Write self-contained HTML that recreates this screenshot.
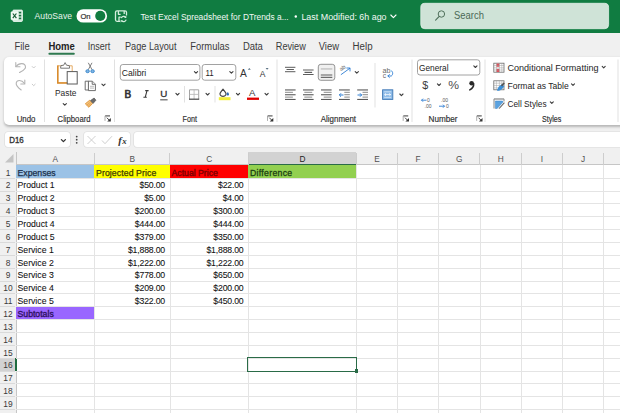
<!DOCTYPE html>
<html><head><meta charset="utf-8">
<style>
*{margin:0;padding:0;box-sizing:border-box}
html,body{width:620px;height:413px;overflow:hidden;background:#fff;font-family:"Liberation Sans",sans-serif;}
.a{position:absolute}
#title{position:absolute;left:0;top:0;width:620px;height:32.5px;background:#107c41}
#menu{position:absolute;left:0;top:32.5px;width:620px;height:119.5px;background:#f0f0f0}
#ribbon{position:absolute;left:4.3px;top:57px;width:630px;height:68.1px;background:#fff;border-radius:5px;box-shadow:0 1.2px 2.5px rgba(0,0,0,.24)}
.box{position:absolute;background:#fff;border-radius:3px;box-shadow:0 0 0 0.6px #dadada}
.colhdr{position:absolute;left:0;top:152px;width:620px;height:13px;background:#f0f0f0;border-bottom:1px solid #c6c6c6}
.rowhdr{position:absolute;left:0;top:152px;width:16.5px;height:261px;background:#f0f0f0;border-right:1px solid #c6c6c6}
.ch{position:absolute;top:152.6px;height:12px;line-height:12px;text-align:center;font-size:8.3px;color:#505050;padding-left:1px}
.cs{position:absolute;top:152.5px;width:1px;height:12px;background:#cdcdcd}
.hl{position:absolute;left:16px;width:604px;height:1px;background:#e4e4e4}
.vl{position:absolute;top:165px;width:1px;height:248px;background:#e4e4e4}
.rh{position:absolute;left:0.5px;width:15px;text-align:center;font-size:8.4px;color:#3a3a3a;line-height:13px;padding-top:1.6px}
.rs{position:absolute;left:0;width:15px;height:1px;background:#dadada}
.ct{position:absolute;font-size:8.7px;line-height:13px;color:#111;white-space:nowrap;padding-top:1.6px;-webkit-text-stroke:0.08px currentColor}
</style></head><body>
<div id="title"></div>
<div id="menu"></div>
<div id="ribbon"></div>
<svg class="a" style="left:0;top:0" width="620" height="60" viewBox="0 0 620 60" font-family="Liberation Sans, sans-serif">
  <!-- excel icon -->
  <rect x="12.9" y="10.1" width="9.5" height="11.3" rx="0.8" fill="#cfeada" stroke="#f4fbf6" stroke-width="0.9"/>
  <g fill="#1a6b3f"><rect x="18.6" y="11.8" width="2.6" height="1.6"/><rect x="18.6" y="14.8" width="2.6" height="1.6"/><rect x="18.6" y="17.6" width="2.6" height="1.6"/></g>
  <path d="M13.5 13.6h4.5 M13.5 16.6h4.5 M13.5 19.4h4.5" stroke="#9fd1b2" stroke-width="0.5"/>
  <rect x="11" y="11.8" width="7.2" height="7.9" rx="0.6" fill="#f0faf3" stroke="#ffffff" stroke-width="0.5"/>
  <path d="M12.8 13.5l3.6 4.6 M16.4 13.5l-3.6 4.6" stroke="#175c36" stroke-width="1.2"/>
  <g fill="#ffffff">
    <text x="34.6" y="19.2" font-size="8.8" textLength="37.4" lengthAdjust="spacingAndGlyphs" fill="#e6f2ea">AutoSave</text>
  </g>
  <!-- toggle -->
  <rect x="76.5" y="9.2" width="30.6" height="13.4" rx="6.7" fill="#fff"/>
  <circle cx="100.3" cy="15.9" r="5.1" fill="#107c41"/>
  <text x="80.4" y="19.1" font-size="7.6" fill="#333" stroke="#333" stroke-width="0.2" textLength="10.2" lengthAdjust="spacingAndGlyphs">On</text>
  <!-- save icon -->
  <g fill="none" stroke="#d4eedd" stroke-width="1.3" stroke-linejoin="round">
    <path d="M120 21.3h-3c-0.9 0-1.5-0.6-1.5-1.5v-7.5c0-0.9 0.6-1.5 1.5-1.5h8c0.9 0 1.5 0.6 1.5 1.5v3.2"/>
    <path d="M118.4 11v3.3h2.2 M124.2 11v3"/>
    <path d="M119 21v-3.8h1.8"/>
  </g>
  <g fill="none" stroke="#d4eedd" stroke-width="1.2">
    <path d="M121.2 18.2a2.6 2.6 0 0 1 4.6 -0.8 M126.2 19.6a2.6 2.6 0 0 1 -4.6 1"/>
  </g>
  <path d="M126.3 15.8v2.2h-2.2z M120.6 22.4v-2.2h2.2z" fill="#d4eedd"/>
  <text x="140.4" y="19.6" font-size="8.9" fill="#f2f8f4" textLength="148.3" lengthAdjust="spacingAndGlyphs">Test Excel Spreadsheet for DTrends a...</text>
  <circle cx="295.8" cy="16.5" r="1.2" fill="#fff"/>
  <text x="301.4" y="19.6" font-size="8.9" fill="#f2f8f4" textLength="85.2" lengthAdjust="spacingAndGlyphs">Last Modified: 6h ago</text>
  <path d="M390.8 15l2.6 2.6 2.6-2.6" fill="none" stroke="#fff" stroke-width="1.1" stroke-linecap="round" stroke-linejoin="round"/>
  <!-- search -->
  <rect x="420.8" y="3.3" width="187.8" height="25.4" rx="4" fill="#cfe3d7" stroke="#e4f0e8" stroke-width="0.8"/>
  <circle cx="441.4" cy="14" r="3.2" fill="none" stroke="#4f6f5a" stroke-width="1"/>
  <path d="M439 16.6l-3.4 3.6" stroke="#4f6f5a" stroke-width="1.1" stroke-linecap="round"/>
  <text x="454.1" y="19.4" font-size="10.6" fill="#4a6956" textLength="29.8" lengthAdjust="spacingAndGlyphs">Search</text>
  <!-- menu -->
  <g fill="#3a3a3a" font-size="10">
    <text x="14.5" y="49.5" textLength="15.2" lengthAdjust="spacingAndGlyphs">File</text>
    <text x="48.4" y="49.5" textLength="26.4" lengthAdjust="spacingAndGlyphs" font-weight="bold" fill="#222">Home</text>
    <text x="87.7" y="49.5" textLength="22.6" lengthAdjust="spacingAndGlyphs">Insert</text>
    <text x="125" y="49.5" textLength="51.5" lengthAdjust="spacingAndGlyphs">Page Layout</text>
    <text x="190.3" y="49.5" textLength="39.1" lengthAdjust="spacingAndGlyphs">Formulas</text>
    <text x="242.9" y="49.5" textLength="20" lengthAdjust="spacingAndGlyphs">Data</text>
    <text x="275.8" y="49.5" textLength="30" lengthAdjust="spacingAndGlyphs">Review</text>
    <text x="318.7" y="49.5" textLength="20.3" lengthAdjust="spacingAndGlyphs">View</text>
    <text x="352.6" y="49.5" textLength="20" lengthAdjust="spacingAndGlyphs">Help</text>
  </g>
  <rect x="48.4" y="52.8" width="26.4" height="1.9" rx="0.9" fill="#2f7a50"/>
</svg>
<svg class="a" style="left:0;top:0" width="620" height="413" viewBox="0 0 620 413" font-family="Liberation Sans, sans-serif">
<!-- font name/size boxes -->
<rect x="120.3" y="64.5" width="79.6" height="15.7" rx="2.5" fill="#fff" stroke="#8a8a8a" stroke-width="0.8"/>
<rect x="202.2" y="64.5" width="33.6" height="15.7" rx="2.5" fill="#fff" stroke="#8a8a8a" stroke-width="0.8"/>
<!-- number format box -->
<rect x="417.5" y="59.8" width="62.3" height="15.2" rx="2.5" fill="#fff" stroke="#8a8a8a" stroke-width="0.8"/>

<g fill="#e1e1e1">
  <rect x="44" y="59.5" width="1" height="62.5"/>
  <rect x="114" y="59.5" width="1" height="62.5"/>
  <rect x="276.5" y="59.5" width="1" height="62.5"/>
  <rect x="411.5" y="59.5" width="1" height="62.5"/>
  <rect x="484.5" y="59.5" width="1" height="62.5"/>
  <rect x="617.5" y="59.5" width="1" height="62.5"/>
  <rect x="184" y="86" width="1" height="16.5"/>
  <rect x="214.5" y="86" width="1" height="16.5"/>
  <rect x="374.5" y="63" width="1" height="44.5"/>
</g>
<!-- group labels -->
<g fill="#2e2e2e" font-size="8.2" stroke="#2e2e2e" stroke-width="0.15" transform="translate(0,0.6)">
  <text x="16.7" y="121.8" textLength="18.8" lengthAdjust="spacingAndGlyphs">Undo</text>
  <text x="57.6" y="121.8" textLength="32.9" lengthAdjust="spacingAndGlyphs">Clipboard</text>
  <text x="182.6" y="121.8" textLength="14.4" lengthAdjust="spacingAndGlyphs">Font</text>
  <text x="320.8" y="121.8" textLength="35.2" lengthAdjust="spacingAndGlyphs">Alignment</text>
  <text x="428.6" y="121.8" textLength="29" lengthAdjust="spacingAndGlyphs">Number</text>
  <text x="542" y="121.8" textLength="19.3" lengthAdjust="spacingAndGlyphs">Styles</text>
</g>
<!-- launchers -->
<g>
<path d="M105 115.9h5 M105 115.9v5" fill="none" stroke="#999" stroke-width="0.8"/><path d="M105.3 115.9h4.7" fill="none" stroke="#555" stroke-width="0.9"/><path d="M106.8 117.7l2.8 2.8" stroke="#333" stroke-width="0.9"/><path d="M110.8 121.5v-3.6l-3.6 3.6z" fill="#333"/>
<path d="M267.5 115.9h5 M267.5 115.9v5" fill="none" stroke="#999" stroke-width="0.8"/><path d="M267.8 115.9h4.7" fill="none" stroke="#555" stroke-width="0.9"/><path d="M269.3 117.7l2.8 2.8" stroke="#333" stroke-width="0.9"/><path d="M273.3 121.5v-3.6l-3.6 3.6z" fill="#333"/>
<path d="M403.2 115.9h5 M403.2 115.9v5" fill="none" stroke="#999" stroke-width="0.8"/><path d="M403.5 115.9h4.7" fill="none" stroke="#555" stroke-width="0.9"/><path d="M405.0 117.7l2.8 2.8" stroke="#333" stroke-width="0.9"/><path d="M409.0 121.5v-3.6l-3.6 3.6z" fill="#333"/>
<path d="M476.7 115.9h5 M476.7 115.9v5" fill="none" stroke="#999" stroke-width="0.8"/><path d="M477.0 115.9h4.7" fill="none" stroke="#555" stroke-width="0.9"/><path d="M478.5 117.7l2.8 2.8" stroke="#333" stroke-width="0.9"/><path d="M482.5 121.5v-3.6l-3.6 3.6z" fill="#333"/>
</g>
<!-- chevrons -->
<g fill="none" stroke="#3c3c3c" stroke-width="1.1" stroke-linecap="round" stroke-linejoin="round" transform="translate(0,-0.6)">
  <path d="M63.2 104.2l1.6 1.6 1.6-1.6"/>
  <path d="M101.9 84.7l1.6 1.6 1.6-1.6"/>
  <path d="M194.4 72.2l1.6 1.6 1.6-1.6"/>
  <path d="M229.8 72.2l1.6 1.6 1.6-1.6"/>
  <path d="M175.9 94l1.6 1.6 1.6-1.6"/>
  <path d="M206 94l1.6 1.6 1.6-1.6"/>
  <path d="M236.4 94l1.6 1.6 1.6-1.6"/>
  <path d="M265 94l1.6 1.6 1.6-1.6"/>
  <path d="M355.2 72.2l1.6 1.6 1.6-1.6"/>
  <path d="M399.8 94.6l1.6 1.6 1.6-1.6"/>
  <path d="M473.8 66.5l1.6 1.6 1.6-1.6"/>
  <path d="M437.4 84.5l1.6 1.6 1.6-1.6"/>
  <path d="M602.2 67l1.5 1.5 1.5-1.5"/>
  <path d="M571.5 84.5l1.5 1.5 1.5-1.5"/>
  <path d="M550.3 102.5l1.5 1.5 1.5-1.5"/>
</g>
<g fill="none" stroke="#c4c4c4" stroke-width="0.9" stroke-linecap="round" stroke-linejoin="round">
  <path d="M32.2 66.5l1.5 1.5 1.5-1.5"/>
  <path d="M32.2 84.2l1.5 1.5 1.5-1.5"/>
</g>
<!-- undo / redo -->
<g fill="none" stroke="#b4b4b4" stroke-width="1.1" stroke-linecap="round" stroke-linejoin="round">
  <path d="M16 66.5 C19 62.5 25.5 62.5 25.5 67.2 C25.5 69.5 22 71 19.5 72.5"/>
  <path d="M15.8 62.5v4.2h4.2"/>
  <path d="M21.2 90 C18.5 88 15.8 86 16.2 83 C16.8 79.8 21.5 79.5 24.5 83.5"/>
  <path d="M24.8 80v4h-4"/>
</g>
<!-- paste -->
<g>
  <path d="M57.6 65.8h14.6v17h-14.6z" fill="#fff" stroke="#e3a455" stroke-width="0.9"/>
  <path d="M57.8 65.5v17.5h14" fill="none" stroke="#d98c2e" stroke-width="1.6"/>
  <path d="M60.6 68.2l0.3-2.6 2.8-0.4 1.4-2.6 1.4 2.6 2.8 0.4 0.3 2.6z" fill="#fff" stroke="#6a6a6a" stroke-width="0.9" stroke-linejoin="round"/>
  <rect x="67.2" y="71.6" width="10" height="12.4" fill="#fff" stroke="#5a5a5a" stroke-width="1"/>
</g>
<text x="55" y="95.7" font-size="8.4" fill="#2a2a2a" textLength="21.4" lengthAdjust="spacingAndGlyphs">Paste</text>
<!-- cut -->
<g fill="none" stroke-width="0.9">
  <path d="M88.3 62.8l3.8 7 M92 62.8l-3.8 7" stroke="#707070"/>
  <ellipse cx="87.6" cy="71.2" rx="1.7" ry="1.5" stroke="#3a86c8" fill="#7fb6e6"/>
  <ellipse cx="92.6" cy="71.2" rx="1.7" ry="1.5" stroke="#3a86c8" fill="#7fb6e6"/>
</g>
<!-- copy -->
<g fill="#fff" stroke="#5e5e5e" stroke-width="0.9" stroke-linejoin="round">
  <path d="M85.2 81.2h3.5v8.8h-3.5z"/>
  <path d="M88.4 81.2h4l3 3v6.4h-7z"/>
  <path d="M92.2 81.5v2.8h3" />
  <path d="M90 86.3h4 M90 88.1h4" stroke="#aaa" stroke-width="0.8"/>
</g>
<!-- format painter -->
<g stroke-linejoin="round">
  <path d="M85.3 103.8l4.4-3.6 2.8 3.3-3.6 3.8z" fill="#f4c27a" stroke="#d98a2c" stroke-width="0.8"/>
  <path d="M86.8 105.3l3-2.7 M88.2 106.2l2.6-2.6" stroke="#d98a2c" stroke-width="0.6"/>
  <path d="M90.5 100.6l3.6-2.6 1.8 2.2-2.8 3.2z" fill="#6a6a6a" stroke="#555" stroke-width="0.7"/>
</g>
<text x="121.8" y="76" font-size="8.6" fill="#242424" textLength="24.5" lengthAdjust="spacingAndGlyphs">Calibri</text>
<text x="205.4" y="76" font-size="8.6" fill="#242424" textLength="8.2" lengthAdjust="spacingAndGlyphs">11</text>
<!-- grow/shrink -->
<text x="240" y="76.8" font-size="10.2" fill="#333">A</text>
<path d="M247.8 69.8l1.5-1.8 1.5 1.8z" fill="#5b7283"/>
<text x="259.8" y="77" font-size="8.5" fill="#333">A</text>
<path d="M265.6 68l1.5 1.8 1.5-1.8z" fill="#5b7283"/>
<!-- B I U -->
<text x="124.6" y="97.8" font-size="10" fill="#333" stroke="#333" stroke-width="0.65">B</text>
<path d="M145.2 90.6h3.4 M143.4 97.3h3.4 M147 90.6l-1.8 6.7" fill="none" stroke="#3a3a3a" stroke-width="1.1"/>
<text x="160.2" y="97.3" font-size="9.8" fill="#303030" stroke="#303030" stroke-width="0.3">U</text>
<rect x="160.2" y="99.4" width="7.4" height="0.9" fill="#303030"/>
<!-- borders -->
<g fill="none">
  <path d="M189.5 99v-9.2h9.2v9.2" stroke="#9a9a9a" stroke-width="0.9"/>
  <path d="M194.1 89.8v9.2 M189.5 94.4h9.2" stroke="#b5b5b5" stroke-width="0.8"/>
  <path d="M189 99.2h10.2" stroke="#444" stroke-width="1.2"/>
</g>
<!-- fill color -->
<path d="M223 89.2l-2.6 3.4c-1 1.5-0.2 3.8 2.6 3.8s3.6-2.3 2.6-3.8z" fill="#fff" stroke="#454545" stroke-width="1.2" stroke-linejoin="round"/>
<path d="M227.8 92c-0.8 1-1.2 1.8-1.2 2.4 0 0.7 0.5 1.1 1.2 1.1s1.2-0.4 1.2-1.1c0-0.6-0.4-1.4-1.2-2.4z" fill="#2f6db5"/>
<rect x="218.8" y="97.2" width="11.7" height="3" fill="#f2ee3a"/>
<!-- font color -->
<text x="249" y="95.8" font-size="9.6" fill="#383838">A</text>
<rect x="247" y="97.6" width="12" height="2.3" fill="#e00000"/>
<!-- alignment icons -->
<g fill="#5c5c5c">
  <rect x="285" y="66.8" width="10.4" height="1"/><rect x="286.5" y="69" width="7.4" height="1"/><rect x="285" y="71.2" width="10.4" height="1"/>
  <rect x="303" y="69.5" width="10.6" height="1"/><rect x="304.5" y="71.8" width="7.6" height="1.2"/><rect x="303" y="74" width="10.6" height="1"/>
  <rect x="320.5" y="73.5" width="11" height="1"/><rect x="320.5" y="75.8" width="11" height="1.2"/><rect x="320.5" y="78" width="11" height="1"/>
</g>
<rect x="318.3" y="64.3" width="16.5" height="16" rx="2.5" fill="#f0f0f0" stroke="#7a7a7a" stroke-width="0.8"/>
<g fill="#5c5c5c">
  <rect x="320.8" y="68.5" width="11.5" height="0.9" fill="#aaa"/><rect x="320.8" y="74.5" width="11.5" height="1"/><rect x="320.8" y="76.8" width="11.5" height="1.1"/>
</g>
<!-- orientation -->
<text x="0" y="0" font-size="5.6" fill="#5a5a5a" transform="translate(341,71.2) rotate(-35)">ab</text>
<g fill="none" stroke="#2b7cd3" stroke-width="0.9" stroke-linecap="round">
  <path d="M341.2 74.5l8.6-6.2"/>
  <path d="M346.8 68h3.2v3"/>
</g>
<g>
<rect x="285" y="89.4" width="10.6" height="1.1" fill="#5a5a5a"/>
<rect x="285.0" y="91.8" width="7.9" height="1" fill="#8a8a8a"/>
<rect x="285" y="94.2" width="10.6" height="1.1" fill="#5a5a5a"/>
<rect x="285.0" y="96.6" width="7.9" height="1" fill="#8a8a8a"/>
<rect x="285" y="98.9" width="10.6" height="1.1" fill="#5a5a5a"/>
<rect x="303" y="89.4" width="10.6" height="1.1" fill="#5a5a5a"/>
<rect x="304.3" y="91.8" width="7.9" height="1" fill="#8a8a8a"/>
<rect x="303" y="94.2" width="10.6" height="1.1" fill="#5a5a5a"/>
<rect x="304.3" y="96.6" width="7.9" height="1" fill="#8a8a8a"/>
<rect x="303" y="98.9" width="10.6" height="1.1" fill="#5a5a5a"/>
<rect x="321" y="89.4" width="10.6" height="1.1" fill="#5a5a5a"/>
<rect x="323.7" y="91.8" width="7.9" height="1" fill="#8a8a8a"/>
<rect x="321" y="94.2" width="10.6" height="1.1" fill="#5a5a5a"/>
<rect x="323.7" y="96.6" width="7.9" height="1" fill="#8a8a8a"/>
<rect x="321" y="98.9" width="10.6" height="1.1" fill="#5a5a5a"/>
<rect x="339" y="89.4" width="10.8" height="1.1" fill="#5a5a5a"/>
<rect x="344.3" y="91.8" width="5.5" height="1" fill="#8a8a8a"/>
<rect x="344.3" y="94.2" width="5.5" height="1" fill="#8a8a8a"/>
<rect x="344.3" y="96.6" width="5.5" height="1" fill="#8a8a8a"/>
<rect x="339" y="98.9" width="10.8" height="1.1" fill="#5a5a5a"/>
<rect x="357.2" y="89.4" width="10.8" height="1.1" fill="#5a5a5a"/>
<rect x="362.5" y="91.8" width="5.5" height="1" fill="#8a8a8a"/>
<rect x="362.5" y="94.2" width="5.5" height="1" fill="#8a8a8a"/>
<rect x="362.5" y="96.6" width="5.5" height="1" fill="#8a8a8a"/>
<rect x="357.2" y="98.9" width="10.8" height="1.1" fill="#5a5a5a"/>
</g>
<g fill="none" stroke="#2b7cd3" stroke-width="1">
  <path d="M343.5 95h-4 M341 93.3l-1.7 1.7 1.7 1.7"/>
  <path d="M357.5 95h4 M360 93.3l1.7 1.7-1.7 1.7"/>
</g>
<!-- wrap text -->
<text x="382.6" y="72.6" font-size="6.8" fill="#6a6a6a" textLength="8" lengthAdjust="spacingAndGlyphs">ab</text>
<text x="382.8" y="77.8" font-size="6.8" fill="#6a6a6a">c</text>
<g fill="none" stroke="#2b7cd3" stroke-width="0.9" stroke-linecap="round" stroke-linejoin="round">
  <path d="M391.5 70.8c1.5 0.8 1.8 3.8-0.2 5.2h-3.3"/>
  <path d="M389.4 74.5l-1.5 1.5 1.5 1.5"/>
</g>
<!-- merge -->
<rect x="382.6" y="89.8" width="10.2" height="9.6" fill="#8dbbe8" stroke="#3f78b5" stroke-width="0.9"/>
<path d="M384.2 91.8h7 M384.2 97.4h7" stroke="#d9e9f8" stroke-width="0.8"/>
<path d="M384.6 94.6h6.2 M386 93.4l-1.3 1.2 1.3 1.2 M389.4 93.4l1.3 1.2-1.3 1.2" fill="none" stroke="#fff" stroke-width="0.8"/>
<text x="419" y="71" font-size="8.6" fill="#242424" textLength="29.6" lengthAdjust="spacingAndGlyphs">General</text>
<text x="422.2" y="89" font-size="11.6" fill="#3a3a3a" textLength="6" lengthAdjust="spacingAndGlyphs">$</text>
<text x="448.3" y="89.4" font-size="11.8" fill="#505050" textLength="10.8" lengthAdjust="spacingAndGlyphs">%</text>
<circle cx="471.6" cy="83.2" r="2.3" fill="#2a2a2a"/>
<path d="M473.6 83.5c0.3 2.8-1.2 5-3.8 6.4" fill="none" stroke="#2a2a2a" stroke-width="1.6" stroke-linecap="round"/>
<!-- dec/inc decimal -->
<g font-size="5" fill="#555">
  <text x="427" y="102">0</text>
  <text x="424.5" y="108">.00</text>
  <text x="441" y="102">.00</text>
  <text x="446" y="108">0</text>
</g>
<g fill="none" stroke="#2b7cd3" stroke-width="0.9">
  <path d="M426.5 100.2h-5 M423 98.7l-1.5 1.5 1.5 1.5"/>
  <path d="M439 106.2h5.5 M443 104.7l1.5 1.5-1.5 1.5"/>
</g>
<!-- styles icons -->
<g>
  <rect x="493.8" y="63.2" width="10.2" height="9" fill="#fff" stroke="#6a6a6a" stroke-width="0.8"/>
  <rect x="496.4" y="63.6" width="3" height="3.2" fill="#e0505a"/>
  <rect x="496.4" y="68.8" width="3" height="3.2" fill="#e0505a"/>
  <path d="M493.8 65.5h10.2 M493.8 67.8h10.2 M493.8 70h10.2 M496.4 63.2v9 M499.4 63.2v9 M501.8 63.2v9" stroke="#9a9a9a" stroke-width="0.45"/>
</g>
<g>
  <rect x="493.8" y="80.8" width="10.2" height="9" fill="#fff" stroke="#6a6a6a" stroke-width="0.8"/>
  <path d="M493.8 83.2h10.2 M493.8 85.5h10.2 M493.8 87.8h10.2 M496.4 80.8v9 M499.4 80.8v9 M501.8 80.8v9" stroke="#9a9a9a" stroke-width="0.45"/>
  <path d="M497 90.8c0.5-2 1.2-3.8 2.5-4.8l2.2-1.8 2.6 2-2 2.5c-1 1.3-3 2.2-5.3 2.1z" fill="#3d8fd6"/>
  <path d="M500.8 85.2l2.8-2.8 1.2 1.2-2.6 2.8z" fill="#555"/>
</g>
<g>
  <path d="M494 108.5v-9.6h10v2.5" fill="none" stroke="#6a6a6a" stroke-width="0.8"/>
  <path d="M494.4 99.4h9.2" stroke="#999" stroke-width="0.5"/>
  <path d="M495.4 101h7.2l0.4 1-5.8 6.5h-1.8z" fill="#5aa2e0" stroke="#3a82c4" stroke-width="0.5"/>
  <path d="M498.5 108.4l5.5-6.2 0.8 0.8-5.2 5.8z" fill="#666"/>
</g>
<g fill="#242424" font-size="8.6">
  <text x="507.5" y="71.1" textLength="91" lengthAdjust="spacingAndGlyphs">Conditional Formatting</text>
  <text x="507.5" y="89" textLength="61.2" lengthAdjust="spacingAndGlyphs">Format as Table</text>
  <text x="507.5" y="106.6" textLength="39.1" lengthAdjust="spacingAndGlyphs">Cell Styles</text>
</g>
</svg>

<div class="box" style="left:5.3px;top:132.2px;width:64.4px;height:15.2px"></div>
<div class="box" style="left:83.5px;top:132.2px;width:46.7px;height:15.2px"></div>
<div class="box" style="left:133.6px;top:132.2px;width:500px;height:15.2px"></div>
<svg class="a" style="left:0;top:125" width="620" height="40" viewBox="0 125 620 40" font-family="Liberation Sans, sans-serif">
  <text x="9.2" y="143.3" font-size="9" fill="#333" stroke="#333" stroke-width="0.35" textLength="14.5" lengthAdjust="spacingAndGlyphs">D16</text>
  <path d="M61.4 139.6l2 2 2-2" fill="none" stroke="#333" stroke-width="1.3" stroke-linecap="round" stroke-linejoin="round"/>
  <g fill="#444"><circle cx="76.7" cy="136.6" r="0.9"/><circle cx="76.7" cy="139.7" r="0.9"/><circle cx="76.7" cy="142.8" r="0.9"/></g>
  <path d="M87.5 136l8 8 M95.5 136l-8 8" stroke="#c8c8c8" stroke-width="0.9"/>
  <path d="M102 140.5l3 3.2 7-7.5" fill="none" stroke="#c8c8c8" stroke-width="0.9"/>
  <text x="118.3" y="143.6" font-size="10.5" font-weight="bold" font-style="italic" font-family="Liberation Serif, serif" fill="#333">f</text>
  <text x="122.2" y="143.6" font-size="8.8" font-weight="bold" font-style="italic" font-family="Liberation Serif, serif" fill="#333">x</text>
  <!-- corner triangle -->
  <path d="M13.5 154.5v8.5h-8.5z" fill="#c8c8c8"/>
</svg>
<div class="colhdr"></div>
<div class="rowhdr"></div>
<div style="position:absolute;left:248px;top:152px;width:108px;height:13px;background:#d2d2d2;"></div>
<div style="position:absolute;left:248px;top:163.6px;width:109px;height:1.5px;background:#2a6b47;"></div>
<div style="position:absolute;left:0;top:357.84px;width:15.5px;height:12.86px;background:#d2d2d2;"></div>
<div style="position:absolute;left:14.5px;top:357.84px;width:2px;height:13.36px;background:#1e6b3f;"></div>
<div class="ch" style="left:15.5px;width:78.5px;">A</div>
<div class="cs" style="left:93.5px"></div>
<div class="ch" style="left:94.0px;width:75.5px;">B</div>
<div class="cs" style="left:169.0px"></div>
<div class="ch" style="left:169.5px;width:78.5px;">C</div>
<div class="cs" style="left:247.5px"></div>
<div class="ch" style="left:248.0px;width:108.0px;color:#222;">D</div>
<div class="cs" style="left:355.5px"></div>
<div class="ch" style="left:356.0px;width:41.0px;">E</div>
<div class="cs" style="left:396.5px"></div>
<div class="ch" style="left:397.0px;width:41.0px;">F</div>
<div class="cs" style="left:437.5px"></div>
<div class="ch" style="left:438.0px;width:41.5px;">G</div>
<div class="cs" style="left:479.0px"></div>
<div class="ch" style="left:479.5px;width:41.5px;">H</div>
<div class="cs" style="left:520.5px"></div>
<div class="ch" style="left:521.0px;width:41.0px;">I</div>
<div class="cs" style="left:561.5px"></div>
<div class="ch" style="left:562.0px;width:41.0px;">J</div>
<div class="cs" style="left:602.5px"></div>
<div class="hl" style="top:177.5px"></div>
<div class="rh" style="top:165.00px;height:12.86px">1</div>
<div class="rs" style="top:177.5px"></div>
<div class="hl" style="top:190.5px"></div>
<div class="rh" style="top:177.86px;height:12.86px">2</div>
<div class="rs" style="top:190.5px"></div>
<div class="hl" style="top:202.5px"></div>
<div class="rh" style="top:190.71px;height:12.86px">3</div>
<div class="rs" style="top:202.5px"></div>
<div class="hl" style="top:215.5px"></div>
<div class="rh" style="top:203.57px;height:12.86px">4</div>
<div class="rs" style="top:215.5px"></div>
<div class="hl" style="top:228.5px"></div>
<div class="rh" style="top:216.42px;height:12.86px">5</div>
<div class="rs" style="top:228.5px"></div>
<div class="hl" style="top:241.5px"></div>
<div class="rh" style="top:229.28px;height:12.86px">6</div>
<div class="rs" style="top:241.5px"></div>
<div class="hl" style="top:254.5px"></div>
<div class="rh" style="top:242.14px;height:12.86px">7</div>
<div class="rs" style="top:254.5px"></div>
<div class="hl" style="top:267.5px"></div>
<div class="rh" style="top:254.99px;height:12.86px">8</div>
<div class="rs" style="top:267.5px"></div>
<div class="hl" style="top:280.5px"></div>
<div class="rh" style="top:267.85px;height:12.86px">9</div>
<div class="rs" style="top:280.5px"></div>
<div class="hl" style="top:292.5px"></div>
<div class="rh" style="top:280.70px;height:12.86px">10</div>
<div class="rs" style="top:292.5px"></div>
<div class="hl" style="top:305.5px"></div>
<div class="rh" style="top:293.56px;height:12.86px">11</div>
<div class="rs" style="top:305.5px"></div>
<div class="hl" style="top:318.5px"></div>
<div class="rh" style="top:306.42px;height:12.86px">12</div>
<div class="rs" style="top:318.5px"></div>
<div class="hl" style="top:331.5px"></div>
<div class="rh" style="top:319.27px;height:12.86px">13</div>
<div class="rs" style="top:331.5px"></div>
<div class="hl" style="top:344.5px"></div>
<div class="rh" style="top:332.13px;height:12.86px">14</div>
<div class="rs" style="top:344.5px"></div>
<div class="hl" style="top:357.5px"></div>
<div class="rh" style="top:344.98px;height:12.86px">15</div>
<div class="rs" style="top:357.5px"></div>
<div class="hl" style="top:370.5px"></div>
<div class="rh" style="top:357.84px;height:12.86px">16</div>
<div class="rs" style="top:370.5px"></div>
<div class="hl" style="top:382.5px"></div>
<div class="rh" style="top:370.70px;height:12.86px">17</div>
<div class="rs" style="top:382.5px"></div>
<div class="hl" style="top:395.5px"></div>
<div class="rh" style="top:383.55px;height:12.86px">18</div>
<div class="rs" style="top:395.5px"></div>
<div class="hl" style="top:408.5px"></div>
<div class="rh" style="top:396.41px;height:12.86px">19</div>
<div class="rs" style="top:408.5px"></div>
<div class="vl" style="left:93.5px"></div>
<div class="vl" style="left:169.5px"></div>
<div class="vl" style="left:247.5px"></div>
<div class="vl" style="left:355.5px"></div>
<div class="vl" style="left:396.5px"></div>
<div class="vl" style="left:437.5px"></div>
<div class="vl" style="left:479.5px"></div>
<div class="vl" style="left:520.5px"></div>
<div class="vl" style="left:561.5px"></div>
<div class="vl" style="left:602.5px"></div>
<div style="position:absolute;left:15.5px;top:165.40px;width:78.5px;height:12.46px;background:#9bc2e6"></div>
<div style="position:absolute;left:94.0px;top:165.40px;width:75.5px;height:12.46px;background:#ffff00"></div>
<div style="position:absolute;left:169.5px;top:165.40px;width:78.5px;height:12.46px;background:#ff0000"></div>
<div style="position:absolute;left:248.0px;top:165.40px;width:108.0px;height:12.46px;background:#92d050"></div>
<div style="position:absolute;left:15.5px;top:306.82px;width:78.5px;height:12.46px;background:#9966ff"></div>
<div class="ct" style="left:17.5px;top:165.00px;color:#1a2f4a;-webkit-text-stroke:0.25px #1a2f4a;">Expenses</div>
<div class="ct" style="left:96.0px;top:165.00px;color:#3d3a00;-webkit-text-stroke:0.25px #3d3a00;letter-spacing:0.1px;">Projected Price</div>
<div class="ct" style="left:171.5px;top:165.00px;color:#7a0000;-webkit-text-stroke:0.35px #7a0000;">Actual Price</div>
<div class="ct" style="left:250.0px;top:165.00px;color:#1c3f10;-webkit-text-stroke:0.3px #1c3f10;letter-spacing:0.3px;">Difference</div>
<div class="ct" style="left:17.5px;top:177.86px;">Product 1</div>
<div class="ct" style="right:455.0px;top:177.86px;letter-spacing:-0.18px;">$50.00</div>
<div class="ct" style="right:376.5px;top:177.86px;letter-spacing:-0.18px;">$22.00</div>
<div class="ct" style="left:17.5px;top:190.71px;">Product 2</div>
<div class="ct" style="right:455.0px;top:190.71px;letter-spacing:-0.18px;">$5.00</div>
<div class="ct" style="right:376.5px;top:190.71px;letter-spacing:-0.18px;">$4.00</div>
<div class="ct" style="left:17.5px;top:203.57px;">Product 3</div>
<div class="ct" style="right:455.0px;top:203.57px;letter-spacing:-0.18px;">$200.00</div>
<div class="ct" style="right:376.5px;top:203.57px;letter-spacing:-0.18px;">$300.00</div>
<div class="ct" style="left:17.5px;top:216.42px;">Product 4</div>
<div class="ct" style="right:455.0px;top:216.42px;letter-spacing:-0.18px;">$444.00</div>
<div class="ct" style="right:376.5px;top:216.42px;letter-spacing:-0.18px;">$444.00</div>
<div class="ct" style="left:17.5px;top:229.28px;">Product 5</div>
<div class="ct" style="right:455.0px;top:229.28px;letter-spacing:-0.18px;">$379.00</div>
<div class="ct" style="right:376.5px;top:229.28px;letter-spacing:-0.18px;">$350.00</div>
<div class="ct" style="left:17.5px;top:242.14px;">Service 1</div>
<div class="ct" style="right:455.0px;top:242.14px;letter-spacing:-0.18px;">$1,888.00</div>
<div class="ct" style="right:376.5px;top:242.14px;letter-spacing:-0.18px;">$1,888.00</div>
<div class="ct" style="left:17.5px;top:254.99px;">Service 2</div>
<div class="ct" style="right:455.0px;top:254.99px;letter-spacing:-0.18px;">$1,222.00</div>
<div class="ct" style="right:376.5px;top:254.99px;letter-spacing:-0.18px;">$1,222.00</div>
<div class="ct" style="left:17.5px;top:267.85px;">Service 3</div>
<div class="ct" style="right:455.0px;top:267.85px;letter-spacing:-0.18px;">$778.00</div>
<div class="ct" style="right:376.5px;top:267.85px;letter-spacing:-0.18px;">$650.00</div>
<div class="ct" style="left:17.5px;top:280.70px;">Service 4</div>
<div class="ct" style="right:455.0px;top:280.70px;letter-spacing:-0.18px;">$209.00</div>
<div class="ct" style="right:376.5px;top:280.70px;letter-spacing:-0.18px;">$200.00</div>
<div class="ct" style="left:17.5px;top:293.56px;">Service 5</div>
<div class="ct" style="right:455.0px;top:293.56px;letter-spacing:-0.18px;">$322.00</div>
<div class="ct" style="right:376.5px;top:293.56px;letter-spacing:-0.18px;">$450.00</div>
<div class="ct" style="left:17.5px;top:306.42px;color:#2c0f5c;-webkit-text-stroke:0.3px #2c0f5c;">Subtotals</div>
<div style="position:absolute;left:247px;top:357px;width:110px;height:14.5px;border:1.7px solid #2a6b47;"></div>
<div style="position:absolute;left:354.5px;top:369px;width:3.5px;height:3.5px;background:#2a6b47;"></div>
<svg class="a" style="left:0;top:150px" width="20" height="16"><path d="M13.5 4v8.5h-8.5z" fill="#c4c4c4"/></svg>
</body></html>
